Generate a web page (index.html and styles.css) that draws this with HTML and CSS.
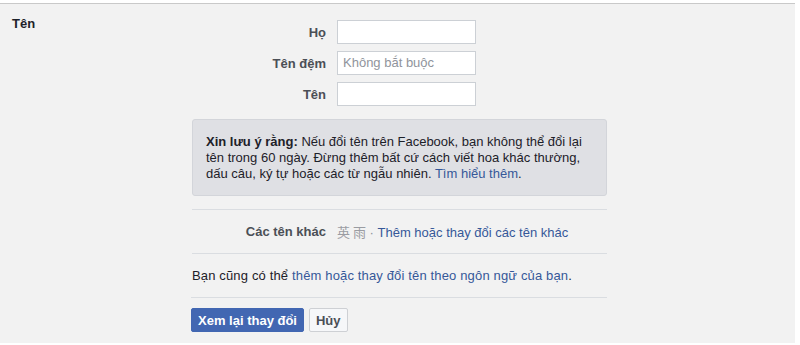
FILE: index.html
```html
<!DOCTYPE html>
<html lang="vi">
<head>
<meta charset="utf-8">
<link rel="stylesheet" href="styles.css">
</head>
<body>
<div class="panel">
  <div class="title">Tên</div>
  <div class="content">
    <div class="fields">
      <label class="lbl">Họ</label>
      <div class="inp"></div>
      <label class="lbl">Tên đệm</label>
      <div class="inp"><span class="ph">Không bắt buộc</span></div>
      <label class="lbl">Tên</label>
      <div class="inp"></div>
    </div>
    <div class="note"><b>Xin lưu ý rằng:</b> Nếu đổi tên trên Facebook, bạn không thể đổi lại tên trong 60 ngày. Đừng thêm bất cứ cách viết hoa khác thường, dấu câu, ký tự hoặc các từ ngẫu nhiên. <a class="link">Tìm hiểu thêm</a>.</div>
    <div class="other">
      <span class="lbl">Các tên khác</span>
      <span class="otherval"><span class="cjk">英 雨</span> · <a class="link">Thêm hoặc thay đổi các tên khác</a></span>
    </div>
    <div class="lang"><span>Bạn cũng có thể&nbsp;<a class="link">thêm hoặc thay đổi tên theo ngôn ngữ của bạn</a>.</span></div>
    <div class="actions">
      <button class="btn primary">Xem lại thay đổi</button>
      <button class="btn">Hủy</button>
    </div>
  </div>
</div>
</body>
</html>
```
FILE: styles.css
```css
html, body {
  margin: 0;
  padding: 0;
  background: #ffffff;
}
body {
  font-family: "Liberation Sans", Arial, "Noto Sans CJK SC", sans-serif;
  font-size: 13px;
  color: #1d2129;
}
.panel {
  margin-top: 3px;
  width: 795px;
  height: 340px;
  box-sizing: border-box;
  background: #f2f2f2;
  border-top: 1px solid #c9c9c9;
  display: flex;
  padding-left: 12px;
}
.title {
  width: 180px;
  font-weight: bold;
  padding-top: 12px;
  line-height: 16px;
}
.content {
  width: 415px;
  padding-top: 16px;
}
.fields {
  display: grid;
  grid-template-columns: 134px 139px;
  column-gap: 11px;
  row-gap: 7px;
  align-items: center;
}
.lbl {
  text-align: right;
  font-weight: bold;
  color: #4b4f56;
}
.inp {
  height: 24px;
  box-sizing: border-box;
  background: #fff;
  border: 1px solid #ccd0d5;
  padding: 0 5px;
  line-height: 22px;
}
.ph {
  color: #90949c;
}
.note {
  margin-top: 13px;
  background: #dfe0e4;
  border: 1px solid #d3d5da;
  border-radius: 3px;
  padding: 14px 13px 13px;
  line-height: 16px;
  color: #1d2129;
}
.link {
  color: #365899;
  text-decoration: none;
}
.other {
  margin-top: 13px;
  border-top: 1px solid #dadde1;
  display: grid;
  grid-template-columns: 134px auto;
  column-gap: 11px;
  height: 43px;
  align-items: center;
}
.otherval {
  color: #90949c;
}
.cjk {
  font-family: "Noto Sans CJK SC", sans-serif;
  color: #9a9ca2;
}
.lang {
  border-top: 1px solid #dadde1;
  height: 43px;
  display: flex;
  align-items: center;
  letter-spacing: 0.15px;
}
.actions {
  border-top: 1px solid #dadde1;
  padding-top: 10px;
  display: flex;
  gap: 5px;
  margin-left: -1px;
}
.btn {
  height: 24px;
  font-family: inherit;
  font-size: 13px;
  font-weight: bold;
  border: 1px solid #ced0d4;
  background: #f6f7f9;
  color: #4b4f56;
  border-radius: 2px;
  padding: 0 6px;
  margin: 0;
}
.btn.primary {
  background: #4267b2;
  border-color: #4267b2;
  color: #fff;
}
```
